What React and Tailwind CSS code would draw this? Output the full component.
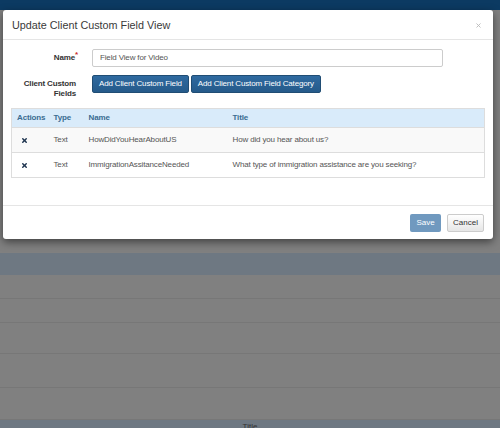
import { X } from "lucide-react";

const rows = [
  { type: "Text", name: "HowDidYouHearAboutUS", title: "How did you hear about us?" },
  { type: "Text", name: "ImmigrationAssitanceNeeded", title: "What type of immigration assistance are you seeking?" },
];

function Backdrop() {
  return (
    <div className="flex h-[428px] w-[500px] flex-col bg-[#808080]">
      <div className="h-[10px] shrink-0 bg-[#0c3a62]" />
      <div className="h-[243px] shrink-0" />
      <div className="h-[22px] shrink-0 bg-[#6e7882]" />
      <div className="h-[24px] shrink-0 border-b border-[#777]" />
      <div className="h-[24px] shrink-0 border-b border-[#777]" />
      <div className="h-[31px] shrink-0 border-b border-[#777]" />
      <div className="h-[34px] shrink-0 border-b border-[#777]" />
      <div className="h-[32px] shrink-0 border-b border-[#777]" />
      <div className="flex min-h-0 flex-1 justify-center overflow-hidden bg-[#6e7882] pt-[3px] text-[8px] leading-[8px] text-[#333]">
        Title
      </div>
    </div>
  );
}

function Modal() {
  return (
    <div className="absolute left-[3px] top-[10px] w-[490px] rounded-[3px] bg-white text-[#333] shadow-[0_3px_9px_rgba(0,0,0,0.5)]">
      {/* header */}
      <div className="flex h-[30px] items-center justify-between border-b border-[#e5e5e5] pl-[9px] pr-[11px] pt-[1px]">
        <h4 className="text-[10.8px] text-[#3a3a3a]">Update Client Custom Field View</h4>
        <X className="h-[7px] w-[7px] text-[#b8b8b8]" strokeWidth={3} />
      </div>

      {/* body */}
      <div className="px-[8px] pb-[27px] pt-[9px] text-[8px] tracking-[-0.15px]">
        <div className="flex items-center">
          <label className="w-[67px] text-right font-bold">
            Name<span className="relative -top-[3px] text-[#c9302c]">*</span>
          </label>
          <div className="ml-[14px] flex h-[18px] w-[351px] items-center rounded-[2px] border border-[#ccc] pl-[7px] text-[#555]">
            Field View for Video
          </div>
        </div>

        <div className="mt-[8px] flex items-start">
          <label className="w-[65px] pt-[4px] text-right font-bold leading-[10px]">
            Client Custom Fields
          </label>
          <div className="ml-[16px] flex gap-[2px]">
            <button className="h-[18px] rounded-[2px] border border-[#204d74] bg-gradient-to-b from-[#2f6aa0] to-[#255a8a] px-[6px] text-white">
              Add Client Custom Field
            </button>
            <button className="h-[18px] rounded-[2px] border border-[#204d74] bg-gradient-to-b from-[#2f6aa0] to-[#255a8a] px-[6px] text-white">
              Add Client Custom Field Category
            </button>
          </div>
        </div>

        <table className="mt-[9px] w-[474px] table-fixed border border-[#ddd] text-left">
          <thead>
            <tr className="h-[19px] bg-[#d9ebfa] text-[#3a6c91]">
              <th className="w-[37px] pl-[5px] font-bold">Actions</th>
              <th className="w-[35px] pl-[5px] font-bold">Type</th>
              <th className="w-[144px] pl-[5px] font-bold">Name</th>
              <th className="pl-[5px] font-bold">Title</th>
            </tr>
          </thead>
          <tbody>
            {rows.map((r, i) => (
              <tr key={r.name} className={"h-[25px] border-t border-[#ddd] " + (i === 0 ? "bg-[#f9f9f9]" : "bg-white")}>
                <td className="pl-[9px]">
                  <X className="h-[7px] w-[7px] text-[#1f3550]" strokeWidth={5} />
                </td>
                <td className="pl-[5px] text-[#555]">{r.type}</td>
                <td className="pl-[5px] text-[#555]">{r.name}</td>
                <td className="pl-[5px] text-[#555]">{r.title}</td>
              </tr>
            ))}
          </tbody>
        </table>
      </div>

      {/* footer */}
      <div className="flex justify-end gap-[6px] border-t border-[#e5e5e5] pb-[7px] pl-[8px] pr-[9px] pt-[8px] text-[8px]">
        <button className="h-[18px] w-[31px] rounded-[2px] bg-[#7099bf] text-white">Save</button>
        <button className="h-[18px] w-[37px] rounded-[2px] border border-[#ccc] bg-gradient-to-b from-white to-[#e6e6e6] text-[#333]">
          Cancel
        </button>
      </div>
    </div>
  );
}

export default function App() {
  return (
    <div className="relative h-[428px] w-[500px] overflow-hidden font-['Liberation_Sans',Arial,sans-serif]">
      <Backdrop />
      <Modal />
    </div>
  );
}
